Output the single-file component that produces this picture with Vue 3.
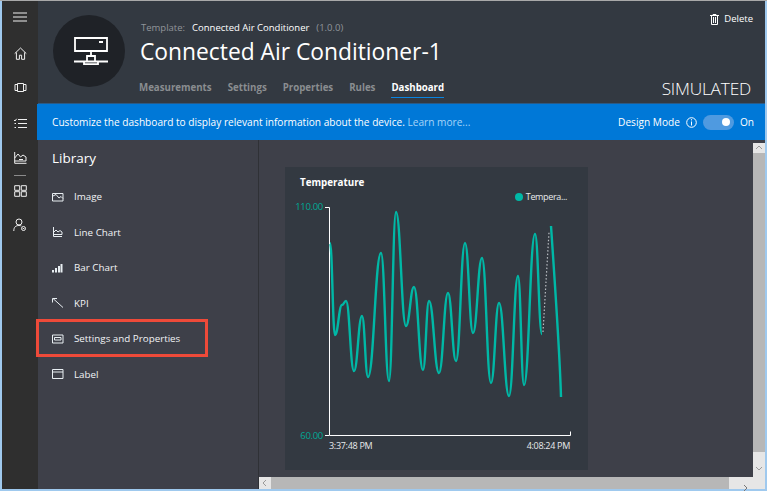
<script setup>
import { computed } from 'vue'

const tabs = [
  { label: 'Measurements', active: false },
  { label: 'Settings', active: false },
  { label: 'Properties', active: false },
  { label: 'Rules', active: false },
  { label: 'Dashboard', active: true },
]

const library = ['Image', 'Line Chart', 'Bar Chart', 'KPI', 'Settings and Properties', 'Label']

const seriesA = [
  [330, 243], [335, 335], [342, 305], [346, 301], [354, 371], [362, 316], [368, 377], [381, 253],
  [389, 381], [396, 212], [406, 326], [414, 287], [423, 370], [429, 301], [439, 373], [448, 293],
  [456, 361], [465, 243], [473, 333], [482, 258], [491, 383], [499, 303], [509, 396], [518, 276],
  [524, 385], [535, 234], [542, 334],
]

function smooth(pts) {
  let d = `M${pts[0][0]} ${pts[0][1]}`
  for (let i = 1; i < pts.length; i++) {
    const [x0, y0] = pts[i - 1]
    const [x1, y1] = pts[i]
    const k = (x1 - x0) * 0.45
    d += ` C${x0 + k} ${y0} ${x1 - k} ${y1} ${x1} ${y1}`
  }
  return d
}
const pathA = computed(() => smooth(seriesA))
const pathB = 'M551 226 C553 255 560 360 561 397'
</script>

<template>
  <div class="frame">
    <nav class="rail">
      <svg class="rail-icon menu" width="14" height="10" viewBox="0 0 14 10"><path d="M0 1h14M0 5h14M0 9h14" /></svg>
      <svg class="rail-icon home" width="13" height="13" viewBox="0 0 13 13"><path d="M.7 6.600 6.500 1l5.800 5.600M2.400 5.400v6.900h3V8.200h2.200v4.100h3V5.400" /></svg>
      <svg class="rail-icon device" width="13" height="11" viewBox="0 0 13 11"><path d="M3.500 1.500h6v8h-6zM3.500 2.500H1v6h2.500M9.500 2.500H12v6H9.500" /></svg>
      <svg class="rail-icon list" width="13" height="11" viewBox="0 0 13 11"><path d="M4 1.500h9M4 5.500h9M4 9.500h9M0 2l1 1 1.600-2.200M.5 5.500h1.500M.5 9.500H2" /></svg>
      <svg class="rail-icon dash" width="13" height="12" viewBox="0 0 13 12"><path d="M.7 0v11.300h11.800M.7 9h11.300V5L9 3 6.500 5 4 2 .7 6" /><path d="M5 7.500h4" /></svg>
      <span class="rail-sep"></span>
      <svg class="rail-icon grid" width="13" height="12" viewBox="0 0 13 12"><path d="M.7.7h5v4.600h-5zM7.300.7h5v4.600h-5zM.7 6.700h5v4.600h-5zM7.300 6.700h5v4.600h-5z" /></svg>
      <svg class="rail-icon user" width="14" height="14" viewBox="0 0 14 14"><circle cx="6" cy="4" r="3" /><path d="M.8 13c0-4 2-5.500 5.200-5.500 1 0 1.800.2 2.400.5" /><circle cx="10.500" cy="10.500" r="2" /><path d="M9.700 10.500h1.600" /></svg>
    </nav>

    <div class="main">
      <header class="header">
        <div class="avatar">
          <svg width="34" height="28" viewBox="0 0 34 28" fill="none" stroke="#fff" stroke-width="1.800">
            <path d="M1 1h32v13H1zM25 5h4M17 14v5M0 24.500h34M13 24v-5h8v5M10 25v2.200h14V25" />
          </svg>
        </div>
        <div class="info">
          <div class="template">
            <span class="muted">Template:</span>
            <span class="tpl-name">Connected Air Conditioner</span>
            <span class="muted">(1.0.0)</span>
          </div>
          <h1 class="title">Connected Air Conditioner-1</h1>
          <div class="tabs">
            <span v-for="t in tabs" :key="t.label" class="tab" :class="{ active: t.active }">{{ t.label }}</span>
          </div>
        </div>
        <div class="side">
          <div class="delete">
            <svg width="9" height="11" viewBox="0 0 9 11" fill="none" stroke="#fff"><path d="M0 1.500h9M3 1.500V.5h3v1M1.500 1.500h6v9h-6zM3.500 3v6M5.500 3v6" /></svg>
            <span>Delete</span>
          </div>
          <div class="simulated">SIMULATED</div>
        </div>
      </header>

      <div class="banner">
        <span class="banner-text">Customize the dashboard to display relevant information about the device. <span class="learn">Learn more...</span></span>
        <div class="mode">
          <span>Design Mode</span>
          <svg width="11" height="11" viewBox="0 0 11 11" fill="none" stroke="#fff"><circle cx="5.500" cy="5.500" r="4.800" /><path d="M5.500 4.500v4M5.500 2.200v1.200" /></svg>
          <span class="toggle"><span class="knob"></span></span>
          <span>On</span>
        </div>
      </div>

      <div class="body">
        <aside class="library">
          <h2 class="lib-title">Library</h2>
          <ul class="lib-list">
            <li v-for="(name, i) in library" :key="name" class="lib-item">
              <svg width="12" height="10" viewBox="0 0 12 10" fill="none" stroke="#e8eef2">
                <g v-if="i === 0"><path d="M.5 1.500h10.500v7.500H.5z" /><path d="M1 4l3-1.500 3 3.500 2-1.500 2 2" /></g>
                <g v-else-if="i === 1"><path d="M1.500 0v9.500H10M1.500 7.500H10V5L8 3.500 6 5 4 3 1.500 5.500" /></g>
                <g v-else-if="i === 2" fill="#e8eef2" stroke="none"><path d="M0 7h2v2.500H0zM3 5h2v4.500H3zM6 3h2v6.500H6zM8.500 1h2v8.500h-2z" /></g>
                <g v-else-if="i === 3"><path d="M1 .5l10 9M.5 4.500V.5H5" /></g>
                <g v-else-if="i === 4"><path d="M.5 1h10.500v8H.5zM2.500 3.500h6.500v2.500H2.500z" /></g>
                <g v-else><path d="M.5 .5h10.500v9H.5zM.5 3h10.500" /></g>
              </svg>
              <span>{{ name }}</span>
            </li>
          </ul>
        </aside>

        <section class="content">
          <div class="content-top">
            <div class="canvas">
              <article class="card">
                <h3 class="card-title">Temperature</h3>
                <div class="legend"><i class="dot"></i><span>Tempera...</span></div>
                <div class="plot">
                  <div class="y-labels"><span>110.00</span><span>60.00</span></div>
                  <svg class="chart" width="250" height="232" viewBox="325 207 250 232">
                    <path d="M325 207.500h4.500V435.500H570.500v-4M325 435.500h4" fill="none" stroke="#fff" />
                    <path :d="pathA" fill="none" stroke="#00b8a6" stroke-width="2.400" />
                    <path :d="pathB" fill="none" stroke="#00b8a6" stroke-width="2.400" />
                    <path d="M543 332 549 232" fill="none" stroke="#b9bdc2" stroke-width="1.200" stroke-dasharray="1.500 2" />
                  </svg>
                </div>
                <div class="x-labels"><span>3:37:48 PM</span><span>4:08:24 PM</span></div>
              </article>
            </div>
            <div class="vbar">
              <svg width="12" height="10" viewBox="0 0 12 10" fill="none" stroke="#9a9a9a" class="vup"><path d="M3 6l3-3 3 3" /></svg>
              <div class="vthumb"></div>
              <svg width="12" height="25" viewBox="0 0 12 25" fill="none" stroke="#9a9a9a" class="vdown"><path d="M3 15l3 3 3-3" /></svg>
            </div>
          </div>
          <div class="hbar">
            <svg width="12" height="12" viewBox="0 0 12 12" fill="none" stroke="#9a9a9a" class="hleft"><path d="M7 3 4 6l3 3" /></svg>
            <div class="hthumb"></div>
            <div class="hright">
              <svg width="23" height="12" viewBox="0 0 23 12" fill="none" stroke="#777"><path d="M15 3l3 3-3 3" /></svg>
            </div>
            <div class="corner"></div>
          </div>
        </section>
      </div>
    </div>

    <div class="highlight"></div>
  </div>
</template>

<style>
html, body { margin: 0; background: #9fc9ee; }
</style>

<style scoped>
* { box-sizing: border-box; }
.frame {
  position: relative;
  width: 767px;
  height: 491px;
  display: flex;
  padding: 0 2px 2px;
  background: #9fc9ee;
  border-top: 1px solid #a9a9a9;
  overflow: hidden;
  font-family: "Open Sans", "Noto Sans", sans-serif;
  color: #fff;
}
.rail {
  width: 36px;
  flex: none;
  background: #2f2f2f;
  display: flex;
  flex-direction: column;
  align-items: center;
  padding-top: 11px;
}
.rail-icon { fill: none; stroke: #f0f0f0; stroke-width: 1; flex: none; display: block; }
.rail-icon.menu { stroke-width: 1.200; }
.home { margin-top: 25px; }
.device { margin-top: 22px; }
.list { margin-top: 25px; }
.dash { margin-top: 23px; }
.rail-sep { width: 12px; height: 1px; background: #8b8b8b; margin-top: 11px; }
.grid { margin-top: 9px; }
.user { margin-top: 21px; }
.main { flex: 1; min-width: 0; display: flex; flex-direction: column; }
.header {
  height: 103px;
  flex: none;
  background: #333941;
  display: flex;
  padding: 14px 12px 0 15px;
  border-bottom: 1px solid #2b5a85;
}
.avatar {
  width: 72px;
  height: 72px;
  border-radius: 50%;
  background: #1f2227;
  flex: none;
  display: flex;
  align-items: center;
  justify-content: center;
  padding-left: 4px;
}
.info { margin-left: 15px; flex: 1; min-width: 0; }
.template { font-size: 9.500px; line-height: 13px; margin: 6px 0 0 1px; display: flex; gap: 7px; }
.muted { color: #91959a; }
.tpl-name { color: #fff; font-weight: 400; }
.title { font-size: 22.800px; font-weight: 400; line-height: 32px; margin: 2px 0 0; white-space: nowrap; }
.tabs { display: flex; gap: 16px; margin-top: 13px; margin-left: -1px; }
.tab { font-size: 9.700px; font-weight: 700; line-height: 14px; color: #8a8d90; padding-bottom: 2px; border-bottom: 1px solid transparent; white-space: nowrap; }
.tab.active { color: #fff; border-bottom-color: #0a84e0; }
.side { display: flex; flex-direction: column; align-items: flex-end; justify-content: space-between; width: 110px; flex: none; }
.delete { display: flex; align-items: center; gap: 5px; font-size: 9.500px; line-height: 12px; margin-top: -2px; }
.simulated { font-size: 17.300px; font-weight: 300; line-height: 20px; margin: 0 2px 4px 0; letter-spacing: -0.2px; }
.banner {
  height: 36px;
  flex: none;
  background: #0078d7;
  display: flex;
  align-items: center;
  justify-content: space-between;
  margin-left: -1px;
  padding: 0 11px 0 15px;
  font-size: 10.150px;
  white-space: nowrap;
}
.learn { color: #a6d4f7; }
.mode { display: flex; align-items: center; gap: 6px; }
.toggle { width: 31px; height: 15px; border-radius: 8px; background: #4f9ae0; display: flex; align-items: center; justify-content: flex-end; padding-right: 4px; }
.knob { width: 8px; height: 8px; border-radius: 50%; background: #fff; }
.body { flex: 1; min-height: 0; display: flex; background: #3e4049; }
.library { width: 221px; flex: none; border-right: 1px solid #2f3136; padding: 9px 0 0 14px; }
.lib-title { font-size: 13.500px; font-weight: 400; line-height: 18px; margin: 0 0 12px; }
.lib-list { list-style: none; margin: 0; padding: 0; display: flex; flex-direction: column; }
.lib-item { height: 35.500px; display: flex; align-items: center; gap: 10px; font-size: 9.800px; white-space: nowrap; color: #f2f4f6; }
.content { flex: 1; min-width: 0; display: flex; flex-direction: column; }
.content-top { flex: 1; min-height: 0; display: flex; }
.canvas { flex: 1; min-width: 0; padding: 27px 0 0 26px; }
.card { width: 303px; height: 303px; background: #333941; padding: 9px 0 0 15px; }
.card-title { font-size: 9.800px; font-weight: 700; line-height: 14px; margin: 0; }
.legend { display: flex; align-items: center; gap: 3px; font-size: 9px; line-height: 12px; color: #e8eaec; justify-content: flex-end; padding-right: 21px; margin-top: 1px; letter-spacing: -0.35px; }
.dot { width: 8px; height: 8px; border-radius: 50%; background: #00b8a6; display: block; }
.plot { position: relative; height: 230px; margin: 4px 0 0 -15px; padding-left: 40px; display: flex; }
.chart { display: block; flex: none; overflow: visible; }
.y-labels { position: absolute; left: 0; top: -6px; width: 38px; height: 241px; display: flex; flex-direction: column; justify-content: space-between; align-items: flex-end; font-size: 9.500px; line-height: 12px; color: #00a896; letter-spacing: -0.3px; }
.x-labels { display: flex; justify-content: space-between; width: 241px; margin: 3px 0 0 29px; font-size: 9px; line-height: 12px; color: #e8eaec; letter-spacing: -0.3px; }
.vbar { width: 12px; flex: none; padding-top: 3px; display: flex; flex-direction: column; }
.vup { background: #e6e6e6; flex: none; display: block; }
.vthumb { flex: 1; background: #b7b7b7; }
.vdown { background: #e6e6e6; flex: none; display: block; }
.hbar { height: 12px; flex: none; display: flex; background: #e6e6e6; }
.hleft { flex: none; display: block; }
.hthumb { width: 458px; background: #b7b7b7; flex: none; }
.hright { width: 23px; flex: none; height: 12px; }
.corner { flex: 1; background: #e6e6e6; }
.highlight {
  position: absolute;
  left: 36px;
  top: 318px;
  width: 172px;
  height: 38px;
  border: 3px solid #ee4a39;
}
</style>
